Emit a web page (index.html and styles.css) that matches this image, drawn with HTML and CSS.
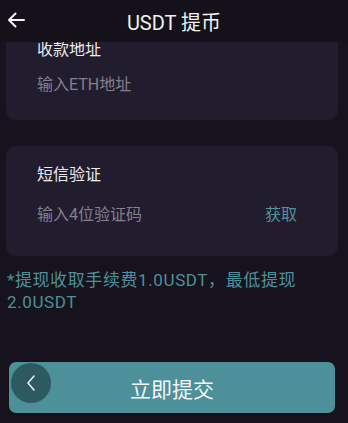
FILE: index.html
```html
<!DOCTYPE html>
<html lang="zh">
<head>
<meta charset="utf-8">
<link rel="stylesheet" href="styles.css">
</head>
<body>
<div class="page">
  <header class="topbar">
    <svg class="back" width="18" height="16" viewBox="0 0 18 16"><path d="M17 8H2M8.5 1.5L2 8l6.5 6.5" fill="none" stroke="#f2f2f2" stroke-width="2" stroke-linecap="round" stroke-linejoin="round"/></svg>
    <h1 class="title">USDT 提币</h1>
  </header>
  <main class="content">
    <section class="card card-addr">
      <div class="card-title">收款地址</div>
      <div class="field"><span class="placeholder">输入ETH地址</span></div>
    </section>
    <section class="card card-sms">
      <div class="card-title">短信验证</div>
      <div class="field"><span class="placeholder">输入4位验证码</span><span class="fetch">获取</span></div>
    </section>
    <p class="note">*提现收取手续费1.0USDT，最低提现<br>2.0USDT</p>
    <button class="submit">
      <span class="float-back"><svg width="12" height="18" viewBox="0 0 12 18"><path d="M9 2L3 9l6 7" fill="none" stroke="#e6eeee" stroke-width="1.6" stroke-linecap="round" stroke-linejoin="round"/></svg></span>
      立即提交
    </button>
  </main>
</div>
</body>
</html>
```

FILE: styles.css
```css
* { box-sizing: border-box; }
html, body { margin: 0; padding: 0; }
body {
  background: #17131e;
  font-family: Roboto, "Noto Sans CJK SC", sans-serif;
  width: 348px;
  height: 423px;
  overflow: hidden;
}
.page {
  height: 423px;
  display: flex;
  flex-direction: column;
}
.topbar {
  position: relative;
  z-index: 2;
  height: 42px;
  flex: 0 0 42px;
  background: #15111b;
  display: flex;
  align-items: center;
  justify-content: center;
}
.back {
  position: absolute;
  left: 7px;
  top: 12px;
}
.title {
  margin: 0;
  font-size: 20px;
  font-weight: 400;
  color: #f2f2f2;
}
.content {
  flex: 1;
  min-height: 0;
  overflow: hidden;
  display: flex;
  flex-direction: column;
  padding: 0 10px 10px 6px;
}
.card {
  background: #221c2f;
  border-radius: 10px;
  padding: 18px 41px 21px 31px;
  display: flex;
  flex-direction: column;
}
.card-addr {
  margin-top: -21px;
  padding-bottom: 15px;
  gap: 0;
}
.card-sms {
  margin-top: 26px;
  gap: 5px;
}
.card-title {
  font-size: 16px;
  line-height: 22px;
  color: #ececec;
}
.field {
  height: 44px;
  display: flex;
  align-items: center;
  justify-content: space-between;
  font-size: 16px;
}
.placeholder { color: #85808d; }
.fetch { color: #4f939c; }
.note {
  margin: 13px 0 0 1px;
  font-size: 17px;
  line-height: 22px;
  letter-spacing: 0.6px;
  color: #4c9199;
}
.submit {
  position: relative;
  margin: auto 3px 0 3px;
  height: 51px;
  border: none;
  border-radius: 7px;
  background: #4d909a;
  color: #f4f6f6;
  font-family: Roboto, "Noto Sans CJK SC", sans-serif;
  font-size: 21px;
  padding: 0;
  display: flex;
  align-items: center;
  justify-content: center;
  box-shadow: 0 1px 2px rgba(0,0,0,0.4);
}
.float-back {
  position: absolute;
  left: 2px;
  top: 1px;
  width: 40px;
  height: 40px;
  border-radius: 50%;
  background: #2d5a60;
  display: flex;
  align-items: center;
  justify-content: center;
}
```
